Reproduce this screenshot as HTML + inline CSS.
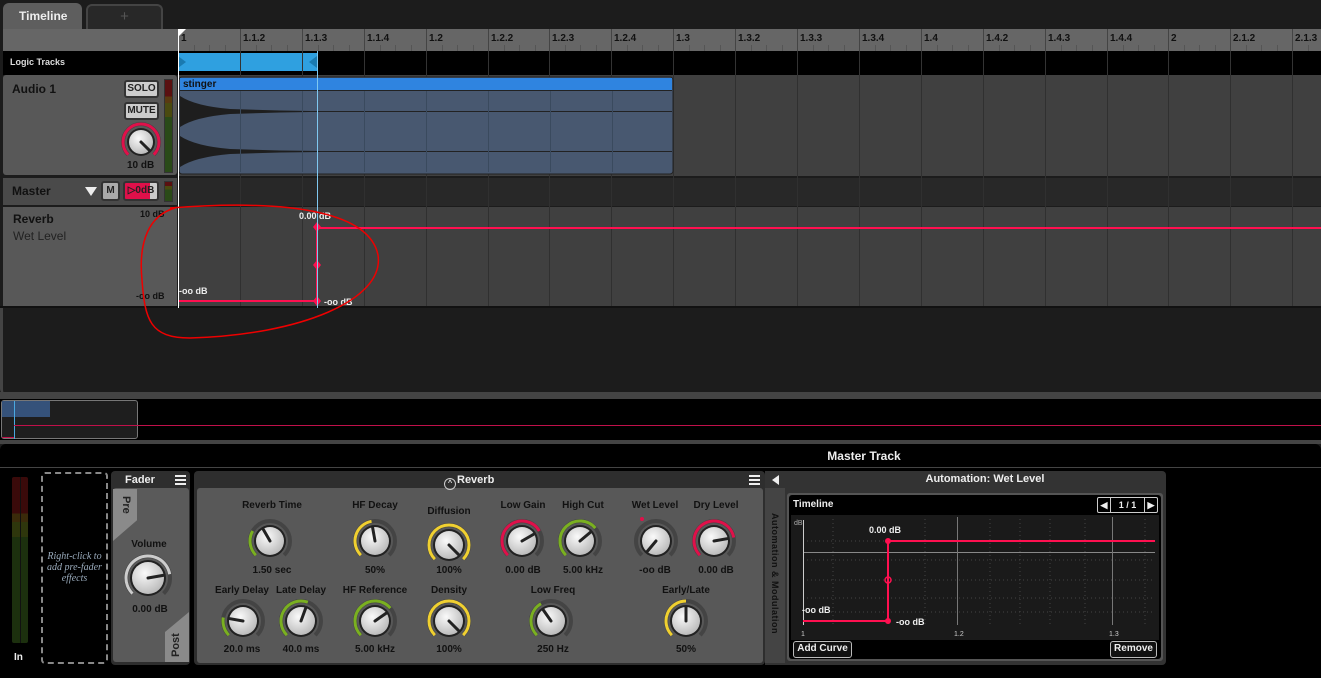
<!DOCTYPE html>
<html><head><meta charset="utf-8"><style>
*{box-sizing:border-box;margin:0;padding:0}
body{width:1321px;height:678px;overflow:hidden;background:#1c1c1c;font-family:"Liberation Sans",sans-serif;position:relative;color:#ddd}
.a{position:absolute}
.b{font-weight:bold}
.lbl{position:absolute;font-size:10px;font-weight:bold;color:#111;text-align:center;width:90px;margin-left:-45px}
.btn{position:absolute;background:#ccc;border:2px solid #333;border-radius:3px;color:#222;font-size:10px;font-weight:bold;text-align:center}
</style></head><body>
<div class="a" style="left:3px;top:3px;width:79px;height:27px;background:#5e5e5e;border-radius:6px 6px 0 0"></div>
<div class="a b" style="left:19px;top:9px;font-size:12px;color:#eee">Timeline</div>
<div class="a" style="left:86px;top:4px;width:77px;height:25px;border:2px solid #444;border-bottom:none;border-radius:6px 6px 0 0;background:#282828;color:#555;text-align:center;font-size:15px;line-height:22px">+</div>
<div class="a" style="left:3px;top:29px;width:175px;height:22px;background:#666"></div>
<div class="a" style="left:178px;top:29px;width:1143px;height:22px;background:#666" id="ruler"></div>
<div class="a" style="left:3px;top:51px;width:1318px;height:24px;background:#000"></div>
<div class="a b" style="left:10px;top:57px;font-size:9px;color:#ddd">Logic Tracks</div>
<div class="a" style="left:178px;top:53px;width:139px;height:18px;background:#2fa0e0"></div>
<div class="a" style="left:178px;top:56px;width:0;height:0;border-top:6px solid transparent;border-bottom:6px solid transparent;border-left:8px solid #1a7ab0"></div>
<div class="a" style="left:309px;top:56px;width:0;height:0;border-top:6px solid transparent;border-bottom:6px solid transparent;border-right:8px solid #1a7ab0"></div>
<div class="a" style="left:3px;top:75px;width:174px;height:100px;background:#585858;border-radius:3px"></div>
<div class="a" style="left:178px;top:75px;width:1143px;height:101px;background:#404040"></div>
<div class="a b" style="left:12px;top:82px;font-size:12px;color:#111">Audio 1</div>
<div class="btn" style="left:124px;top:80px;width:35px;height:18px;line-height:14px">SOLO</div>
<div class="btn" style="left:124px;top:102px;width:35px;height:18px;line-height:14px">MUTE</div>
<div class="a b" style="left:127px;top:160px;font-size:10px;color:#111">10 dB</div>
<div class="a" style="left:164px;top:79px;width:9px;height:94px;border:1px solid #333;background:linear-gradient(#5a1010 0 18%,#5a3a10 18% 25%,#4a4a10 25% 40%,#2a4a18 40%)"></div>
<div class="a" style="left:3px;top:178px;width:174px;height:27px;background:#4a4a4a"></div>
<div class="a" style="left:178px;top:178px;width:1143px;height:28px;background:#282828"></div>
<div class="a b" style="left:12px;top:184px;font-size:12px;color:#111">Master</div>
<div class="a" style="left:85px;top:187px;width:0;height:0;border-left:6px solid transparent;border-right:6px solid transparent;border-top:9px solid #eee"></div>
<div class="btn" style="left:101px;top:181px;width:19px;height:20px;line-height:16px;background:#aaa">M</div>
<div class="btn" style="left:123px;top:181px;width:36px;height:20px;line-height:16px;background:linear-gradient(90deg,#e0104a 78%,#ccc 78%);color:#222">▷0dB</div>
<div class="a" style="left:164px;top:181px;width:9px;height:21px;border:1px solid #333;background:linear-gradient(#5a1010 0 20%,#4a4a10 20% 40%,#2a4a18 40%)"></div>
<div class="a" style="left:3px;top:207px;width:174px;height:99px;background:#585858"></div>
<div class="a" style="left:178px;top:207px;width:1143px;height:99px;background:#404040"></div>
<div class="a b" style="left:13px;top:212px;font-size:12px;color:#111">Reverb</div>
<div class="a" style="left:13px;top:229px;font-size:12px;color:#222">Wet Level</div>
<div class="a b" style="left:140px;top:209px;font-size:9px;color:#111">10 dB</div>
<div class="a b" style="left:136px;top:291px;font-size:9px;color:#111">-oo dB</div>
<div class="a" style="left:0;top:306px;width:1321px;height:2px;background:#111"></div>
<div class="a" style="left:0;top:308px;width:1321px;height:86px;background:#1c1c1c;border-left:3px solid #444;border-radius:0 0 0 5px"></div>
<div class="a" style="left:0;top:392px;width:1321px;height:7px;background:#444"></div>
<div class="a" style="left:0;top:399px;width:1321px;height:41px;background:#000"></div>
<div class="a" style="left:1px;top:400px;width:137px;height:39px;background:#1e1e1e;border:1px solid #777;border-radius:3px"></div>
<div class="a" style="left:2px;top:401px;width:48px;height:16px;background:#35527a"></div>
<div class="a" style="left:14px;top:401px;width:1px;height:38px;background:#4aa8e0"></div>
<div class="a" style="left:14px;top:425px;width:1307px;height:1px;background:#c0104a"></div>
<div class="a" style="left:2px;top:437px;width:12px;height:1px;background:#c0104a"></div>
<div class="a" style="left:0;top:440px;width:1321px;height:4px;background:#444"></div>
<div class="a" style="left:0;top:444px;width:1321px;height:234px;background:#000;border-radius:6px 6px 0 0"></div>
<div class="a b" style="left:764px;top:449px;width:200px;text-align:center;font-size:12px;color:#eee">Master Track</div>
<div class="a" style="left:0;top:467px;width:1321px;height:1px;background:#444"></div>
<div class="a" style="left:12px;top:477px;width:16px;height:166px;background:linear-gradient(#3a0a0a 0 22%,#3a2a0a 22% 27%,#2e360c 27% 36%,#1c300e 36%);border-radius:2px"></div>
<div class="a" style="left:20px;top:477px;width:1px;height:166px;background:#111"></div>
<div class="a b" style="left:14px;top:652px;font-size:10px;color:#eee">In</div>
<div class="a" style="left:41px;top:472px;width:67px;height:192px;border:2px dashed #888;border-radius:4px"></div>
<div class="a" style="left:42px;top:551px;width:65px;text-align:center;font-family:'Liberation Serif',serif;font-style:italic;font-size:10px;color:#9ab;line-height:11px">Right-click to add pre-fader effects</div>
<div class="a" style="left:111px;top:471px;width:79px;height:194px;background:#2e2e2e;border-radius:4px"></div>
<div class="a" style="left:113px;top:488px;width:76px;height:174px;background:#5a5a5a;border-radius:3px"></div>
<div class="a b" style="left:125px;top:474px;font-size:11px;color:#eee">Fader</div>
<div class="a" style="left:175px;top:475px;width:11px;height:2px;background:#eee;box-shadow:0 4px #eee,0 8px #eee"></div>
<div class="a" style="left:113px;top:489px;width:24px;height:52px;background:#8a8a8a;clip-path:polygon(0 0,100% 0,100% 60%,0 100%)"></div>
<div class="a b" style="top:496px;font-size:11px;color:#222;transform:rotate(90deg);transform-origin:left top;left:132px">Pre</div>
<div class="a" style="left:165px;top:612px;width:24px;height:50px;background:#8a8a8a;clip-path:polygon(0 40%,100% 0,100% 100%,0 100%)"></div>
<div class="a b" style="left:170px;top:657px;font-size:11px;color:#222;transform:rotate(-90deg);transform-origin:left top">Post</div>
<div class="lbl" style="left:149px;top:539px">Volume</div>
<div class="lbl" style="left:150px;top:604px">0.00 dB</div>
<div class="a" style="left:194px;top:471px;width:571px;height:194px;background:#2e2e2e;border-radius:4px"></div>
<div class="a" style="left:197px;top:488px;width:566px;height:175px;background:#585858;border-radius:3px"></div>
<div class="a b" style="left:444px;top:474px;font-size:11px;color:#eee"><span style="display:inline-block;width:12px;height:12px;border:1px solid #ccc;border-radius:50%;vertical-align:-2px;margin-right:1px;font-size:7px;line-height:10px;text-align:center">^</span>Reverb</div>
<div class="a" style="left:749px;top:475px;width:11px;height:2px;background:#eee;box-shadow:0 4px #eee,0 8px #eee"></div>
<div class="lbl" style="left:272px;top:500px">Reverb Time</div>
<div class="lbl" style="left:272px;top:565px">1.50 sec</div>
<div class="lbl" style="left:375px;top:500px">HF Decay</div>
<div class="lbl" style="left:375px;top:565px">50%</div>
<div class="lbl" style="left:449px;top:506px">Diffusion</div>
<div class="lbl" style="left:449px;top:565px">100%</div>
<div class="lbl" style="left:523px;top:500px">Low Gain</div>
<div class="lbl" style="left:523px;top:565px">0.00 dB</div>
<div class="lbl" style="left:583px;top:500px">High Cut</div>
<div class="lbl" style="left:583px;top:565px">5.00 kHz</div>
<div class="lbl" style="left:655px;top:500px">Wet Level</div>
<div class="lbl" style="left:655px;top:565px">-oo dB</div>
<div class="lbl" style="left:716px;top:500px">Dry Level</div>
<div class="lbl" style="left:716px;top:565px">0.00 dB</div>
<div class="lbl" style="left:242px;top:585px">Early Delay</div>
<div class="lbl" style="left:242px;top:644px">20.0 ms</div>
<div class="lbl" style="left:301px;top:585px">Late Delay</div>
<div class="lbl" style="left:301px;top:644px">40.0 ms</div>
<div class="lbl" style="left:375px;top:585px">HF Reference</div>
<div class="lbl" style="left:375px;top:644px">5.00 kHz</div>
<div class="lbl" style="left:449px;top:585px">Density</div>
<div class="lbl" style="left:449px;top:644px">100%</div>
<div class="lbl" style="left:553px;top:585px">Low Freq</div>
<div class="lbl" style="left:553px;top:644px">250 Hz</div>
<div class="lbl" style="left:686px;top:585px">Early/Late</div>
<div class="lbl" style="left:686px;top:644px">50%</div>
<div class="a" style="left:640px;top:517px;width:4px;height:4px;background:#e0104a;border-radius:50%"></div>
<div class="a" style="left:765px;top:471px;width:401px;height:194px;background:#333;border-radius:0 4px 4px 0"></div>
<div class="a" style="left:765px;top:488px;width:20px;height:175px;background:#444"></div>
<div class="a" style="left:772px;top:475px;width:0;height:0;border-top:5px solid transparent;border-bottom:5px solid transparent;border-right:7px solid #eee"></div>
<div class="a b" style="left:885px;top:473px;width:200px;text-align:center;font-size:11px;color:#eee">Automation: Wet Level</div>
<div class="a b" style="left:780px;top:513px;font-size:9px;color:#111;transform:rotate(90deg);transform-origin:left top;white-space:nowrap;letter-spacing:.5px">Automation &amp; Modulation</div>
<div class="a" style="left:787px;top:493px;width:376px;height:168px;background:#555;border-radius:3px"></div>
<div class="a" style="left:789px;top:495px;width:372px;height:164px;background:#000;border-radius:3px"></div>
<div class="a b" style="left:793px;top:499px;font-size:10px;color:#eee">Timeline</div>
<div class="a" style="left:1097px;top:497px;width:61px;height:16px;border:1px solid #ccc;border-radius:2px;font-size:9px;font-weight:bold;color:#eee;text-align:center;line-height:14px;display:flex"><span style="width:13px;border-right:1px solid #ccc">◀</span><span style="flex:1">1 / 1</span><span style="width:13px;border-left:1px solid #ccc">▶</span></div>
<div class="a" style="left:791px;top:515px;width:368px;height:125px;background:#1a1a1a"></div>
<div class="btn" style="left:793px;top:641px;width:59px;height:17px;line-height:13px;background:#111;color:#eee;border:1px solid #bbb;font-size:10px">Add Curve</div>
<div class="btn" style="left:1110px;top:641px;width:47px;height:17px;line-height:13px;background:#111;color:#eee;border:1px solid #bbb;font-size:10px">Remove</div>
<svg class="a" style="left:0;top:0" width="1321" height="678" id="s"></svg>
<div id="t"></div>
<script>
var s=document.getElementById('s'),h='';
var labels=['1','1.1.2','1.1.3','1.1.4','1.2','1.2.2','1.2.3','1.2.4','1.3','1.3.2','1.3.3','1.3.4','1.4','1.4.2','1.4.3','1.4.4','2','2.1.2','2.1.3'];
var tx='';
for(var i=0;i<19;i++){var x=Math.round(178+i*61.9);
 h+='<line x1="'+(x+.5)+'" y1="29" x2="'+(x+.5)+'" y2="51" stroke="#444"/>';
 for(var k=1;k<4;k++){var xx=Math.round(x+k*15.5)+.5;h+='<line x1="'+xx+'" y1="45" x2="'+xx+'" y2="51" stroke="#555"/>';}
 h+='<line x1="'+(x+.5)+'" y1="51" x2="'+(x+.5)+'" y2="75" stroke="#333"/>';
 h+='<line x1="'+(x+.5)+'" y1="75" x2="'+(x+.5)+'" y2="306" stroke="#303030"/>';
 tx+='<div class="a b" style="left:'+(x+3)+'px;top:33px;font-size:10px;color:#111">'+labels[i]+'</div>';}
document.getElementById('t').innerHTML=tx;
h+='<rect x="179" y="77" width="494" height="97" rx="3" fill="#485870" stroke="#222"/>';
h+='<rect x="180" y="78" width="492" height="12" fill="#2f84e0"/>';
h+='<line x1="180" y1="90.5" x2="672" y2="90.5" stroke="#222"/>';
h+='<line x1="180" y1="111.5" x2="672" y2="111.5" stroke="#222"/><line x1="180" y1="151.5" x2="672" y2="151.5" stroke="#222"/>';
h+='<path d="M180 96 Q195 106 230 109 L280 110.5 L310 111 L310 112 L280 112.5 L230 114 Q195 117 180 127Z" fill="#1e1e1e"/>';
h+='<path d="M180 136 Q195 146 230 149 L280 150.5 L320 151 L320 152 L280 152.5 L230 154 Q195 157 180 167Z" fill="#1e1e1e"/>';
[178,240,302,364,426,488,550,612].forEach(function(x){h+='<line x1="'+(x+.5)+'" y1="91" x2="'+(x+.5)+'" y2="172" stroke="#3a4a5e"/>'});
h+='<text x="183" y="87" font-size="10" font-weight="bold" fill="#111" font-family="Liberation Sans">stinger</text>';
h+='<path d="M179 301 H317 V228 H1321" fill="none" stroke="#ff1050" stroke-width="2"/>';
h+='<path d="M317 222l4 5-4 5-4-5z M317 260l4 5-4 5-4-5z M317 296l4 5-4 5-4-5z" fill="#ff1050"/>';
h+='<text x="299" y="219" font-size="9" font-weight="bold" fill="#eee" font-family="Liberation Sans">0.00 dB</text>';
h+='<text x="179" y="294" font-size="9" font-weight="bold" fill="#eee" font-family="Liberation Sans">-oo dB</text>';
h+='<text x="324" y="305" font-size="9" font-weight="bold" fill="#eee" font-family="Liberation Sans">-oo dB</text>';
h+='<line x1="317.5" y1="51" x2="317.5" y2="308" stroke="#7fc8f0"/>';
h+='<line x1="178.5" y1="29" x2="178.5" y2="308" stroke="#fff"/>';
h+='<path d="M178 29h8l-8 8z" fill="#fff"/>';
h+='<path d="M170 208 C300 198 370 215 378 255 C385 300 300 335 190 338 C150 338 145 320 142 280 C138 240 150 215 175 208" fill="none" stroke="#e00" stroke-width="1.5"/>';
h+='<g stroke="#444" stroke-dasharray="1,3">';
[541,560,580,598,612].forEach(function(y){h+='<line x1="803" y1="'+y+'" x2="1155" y2="'+y+'"/>'});
[833,925,990,1020,1050,1085,1145].forEach(function(x){h+='<line x1="'+x+'" y1="519" x2="'+x+'" y2="625"/>'});
h+='</g><line x1="803" y1="552.5" x2="1155" y2="552.5" stroke="#888"/>';
[957,1112].forEach(function(x){h+='<line x1="'+(x+.5)+'" y1="517" x2="'+(x+.5)+'" y2="625" stroke="#777"/>'});
h+='<line x1="803.5" y1="520" x2="803.5" y2="625" stroke="#ccc"/>';
h+='<path d="M803 621 H888 V541 H1155" fill="none" stroke="#ff1050" stroke-width="2"/>';
h+='<circle cx="888" cy="541" r="3" fill="#ff1050"/><circle cx="888" cy="621" r="3" fill="#ff1050"/><circle cx="888" cy="580" r="3" fill="none" stroke="#ff1050" stroke-width="1.5"/>';
var f='font-family="Liberation Sans" font-weight="bold" fill="#eee"';
h+='<text x="869" y="533" font-size="9" '+f+'>0.00 dB</text><text x="802" y="613" font-size="9" '+f+'>-oo dB</text><text x="896" y="625" font-size="9" '+f+'>-oo dB</text>';
h+='<text x="794" y="525" font-size="7" fill="#aaa" font-family="Liberation Sans">dB</text>';
h+='<text x="801" y="636" font-size="7" fill="#ccc" font-family="Liberation Sans">1</text><text x="954" y="636" font-size="7" fill="#ccc" font-family="Liberation Sans">1.2</text><text x="1109" y="636" font-size="7" fill="#ccc" font-family="Liberation Sans">1.3</text>';
function knob(cx,cy,col,a0,a1,ang,r){r=r||20;
 function pt(a,rr){var t=(a-90)*Math.PI/180;return [cx+rr*Math.cos(t),cy+rr*Math.sin(t)];}
 var p0=pt(-135,r),p1=pt(135,r);
 h+='<path d="M'+p0[0]+' '+p0[1]+' A'+r+' '+r+' 0 1 1 '+p1[0]+' '+p1[1]+'" fill="none" stroke="#444" stroke-width="4"/>';
 if(col){var q0=pt(a0,r),q1=pt(a1,r);var large=(a1-a0)>180?1:0;
 h+='<path d="M'+q0[0]+' '+q0[1]+' A'+r+' '+r+' 0 '+large+' 1 '+q1[0]+' '+q1[1]+'" fill="none" stroke="'+col+'" stroke-width="3"/>';}
 h+='<circle cx="'+cx+'" cy="'+cy+'" r="'+(r-4)+'" fill="#222"/>';
 h+='<circle cx="'+cx+'" cy="'+cy+'" r="'+(r-6)+'" fill="url(#kg)"/>';
 var e=pt(ang,r-6);h+='<line x1="'+cx+'" y1="'+cy+'" x2="'+e[0]+'" y2="'+e[1]+'" stroke="#222" stroke-width="3" stroke-linecap="round"/>';}
h='<defs><radialGradient id="kg" cx="40%" cy="35%" r="70%"><stop offset="0" stop-color="#fafafa"/><stop offset="1" stop-color="#b8b8b8"/></radialGradient></defs>'+h;
knob(141,142,'#e0104a',-135,135,135,18);
knob(148,578,'#ccc',-135,80,80,22);
knob(270,541,'#7ab020',-135,-60,-30);
knob(375,541,'#f0d030',-135,-10,-10);
knob(449,545,'#f0d030',-135,135,135);
knob(522,541,'#e0104a',-135,60,60);
knob(580,541,'#7ab020',-135,50,50);
knob(656,541,null,0,0,-140);
knob(714,541,'#e0104a',-135,80,80);
knob(243,621,'#7ab020',-135,-80,-80);
knob(301,621,'#7ab020',-135,20,20);
knob(375,621,'#7ab020',-135,50,55);
knob(449,621,'#f0d030',-135,135,135);
knob(551,621,'#7ab020',-135,-30,-35);
knob(686,621,'#f0d030',-135,0,0);
s.innerHTML=h;
</script>
</body></html>
